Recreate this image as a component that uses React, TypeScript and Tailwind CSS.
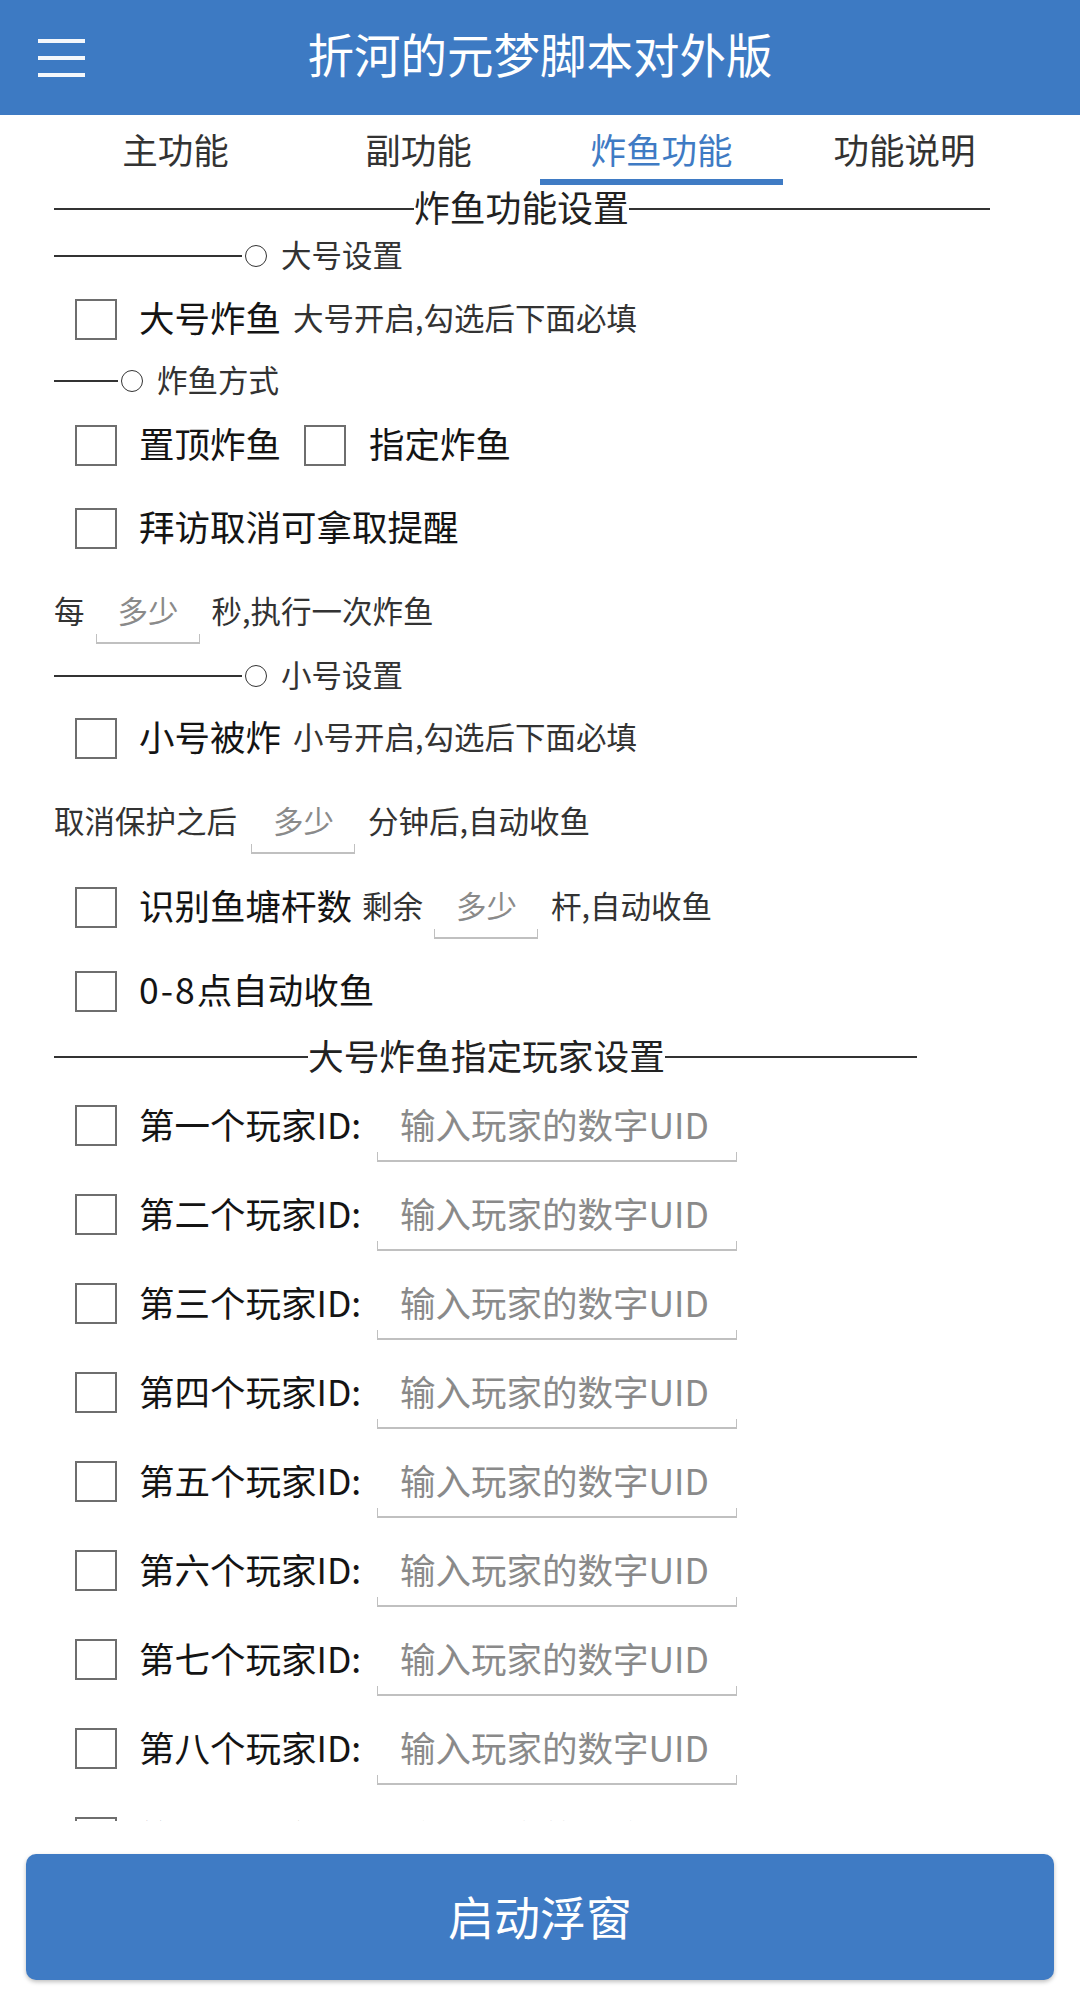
import React from "react";

const font = "font-['Noto_Sans_CJK_SC','Noto_Sans',sans-serif]";

const tabs = ["主功能", "副功能", "炸鱼功能", "功能说明"];
const players = ["第一", "第二", "第三", "第四", "第五", "第六", "第七", "第八", "第九"];

const Line = ({ className }: { className: string }) => (
  <div className={`h-[2px] bg-[#333] shrink-0 ${className}`} />
);

const Circle = ({ className }: { className: string }) => (
  <div className={`w-[22px] h-[22px] rounded-full border-[1.5px] border-[#333] shrink-0 ${className}`} />
);

const Box = ({ className = "" }: { className?: string }) => (
  <div className={`w-[42px] h-[41px] border-2 border-[#6e6e6e] bg-white shrink-0 ${className}`} />
);

// android style edit text: hint + underline with little ticks at the ends
const Field = ({ text, big, className }: { text: string; big?: boolean; className: string }) => (
  <div className={`flex flex-col shrink-0 ${big ? "pt-[14px]" : "pt-[12px]"} ${className}`}>
    <div
      className={
        big
          ? "flex items-center h-[44px] pl-[23px] pb-[4px] text-[35.5px] leading-none text-[#8a8a8a] whitespace-nowrap"
          : "flex items-center h-[40px] pl-[22px] pb-[4px] text-[30.5px] leading-none text-[#8a8a8a] whitespace-nowrap"
      }
    >
      {text}
    </div>
    <div className={`${big ? "mt-[4px]" : "mt-[2px]"} h-[10px] border-x-[1.5px] border-b-2 border-[#c0c0c0]`} />
  </div>
);

const Label = ({ children, className = "" }: { children: React.ReactNode; className?: string }) => (
  <span className={`pb-[4px] text-[35.5px] leading-none text-[#141414] whitespace-nowrap ${className}`}>{children}</span>
);

const Hint = ({ children, className = "" }: { children: React.ReactNode; className?: string }) => (
  <span className={`pb-[4px] text-[30.5px] leading-none text-[#333] whitespace-nowrap ${className}`}>{children}</span>
);

const SubHead = ({ title, line, className }: { title: string; line: string; className: string }) => (
  <div className={`flex items-center pl-[54px] ${className}`}>
    <Line className={line} />
    <Circle className="ml-[3px]" />
    <span className="ml-[14px] pb-[4px] text-[30.5px] leading-none text-[#333]">{title}</span>
  </div>
);

export default function App() {
  return (
    <div className={`w-[1080px] h-[2000px] bg-white flex flex-col ${font}`}>
      {/* top bar */}
      <div className="h-[115px] shrink-0 bg-[#3d7ac3] grid grid-cols-[1fr_auto_1fr] items-center">
        <div className="pl-[38px] flex flex-col gap-[13px]">
          <div className="w-[47px] h-[4px] bg-[#f4f7fb]" />
          <div className="w-[47px] h-[4px] bg-[#f4f7fb]" />
          <div className="w-[47px] h-[4px] bg-[#f4f7fb]" />
        </div>
        <div className="text-[46.5px] leading-none text-white pb-[8px]">折河的元梦脚本对外版</div>
        <div />
      </div>

      <div className="h-[1706px] shrink-0 overflow-hidden flex flex-col">
        {/* tabs */}
        <div className="h-[70px] shrink-0 px-[54px] grid grid-cols-4">
          {tabs.map((t, i) => (
            <div key={t} className="flex flex-col">
              <div
                className={
                  i === 2
                    ? "h-[64px] pt-[4px] flex items-center justify-center text-[35.5px] leading-none text-[#3f7bc4]"
                    : "h-[64px] pt-[4px] flex items-center justify-center text-[35.5px] leading-none text-[#333]"
                }
              >
                {t}
              </div>
              {i === 2 && <div className="h-[6px] bg-[#3f7bc4]" />}
            </div>
          ))}
        </div>

        {/* section heading */}
        <div className="h-[48px] shrink-0 flex items-center pl-[54px]">
          <Line className="w-[360px]" />
          <span className="pb-[4px] text-[35.8px] leading-none text-[#222] whitespace-nowrap">炸鱼功能设置</span>
          <Line className="w-[361px]" />
        </div>

        <SubHead title="大号设置" line="w-[188px]" className="h-[46px] shrink-0" />

        <div className="h-[80px] shrink-0 flex items-center pl-[75px]">
          <Box />
          <Label className="ml-[22px]">大号炸鱼</Label>
          <Hint className="ml-[12px]">大号开启,勾选后下面必填</Hint>
        </div>

        <SubHead title="炸鱼方式" line="w-[64px]" className="h-[44px] shrink-0" />

        <div className="h-[84px] shrink-0 flex items-center pl-[75px]">
          <Box />
          <Label className="ml-[22px]">置顶炸鱼</Label>
          <Box className="ml-[23px]" />
          <Label className="ml-[23px]">指定炸鱼</Label>
        </div>

        <div className="h-[82px] shrink-0 flex items-center pl-[75px]">
          <Box />
          <Label className="ml-[22px]">拜访取消可拿取提醒</Label>
        </div>

        <div className="h-[86px] shrink-0 flex items-center pl-[54px]">
          <Hint>每</Hint>
          <Field text="多少" className="w-[104px] ml-[11px]" />
          <Hint className="ml-[12px]">秒,执行一次炸鱼</Hint>
        </div>

        <SubHead title="小号设置" line="w-[188px]" className="h-[42px] shrink-0" />

        <div className="h-[82px] shrink-0 flex items-center pl-[75px]">
          <Box />
          <Label className="ml-[22px]">小号被炸</Label>
          <Hint className="ml-[12px]">小号开启,勾选后下面必填</Hint>
        </div>

        <div className="h-[86px] shrink-0 flex items-center pl-[54px]">
          <Hint>取消保护之后</Hint>
          <Field text="多少" className="w-[104px] ml-[14px]" />
          <Hint className="ml-[13px]">分钟后,自动收鱼</Hint>
        </div>

        <div className="h-[84px] shrink-0 flex items-center pl-[75px]">
          <Box />
          <Label className="ml-[22px]">识别鱼塘杆数</Label>
          <Hint className="ml-[10px]">剩余</Hint>
          <Field text="多少" className="w-[104px] ml-[11px]" />
          <Hint className="ml-[13px]">杆,自动收鱼</Hint>
        </div>

        <div className="h-[84px] shrink-0 flex items-center pl-[75px]">
          <Box />
          <Label className="ml-[22px]">
            <span className="tracking-[2px]">0-8</span>点自动收鱼
          </Label>
        </div>

        <div className="h-[48px] shrink-0 flex items-center pl-[54px]">
          <Line className="w-[254px]" />
          <span className="pb-[4px] text-[35.7px] leading-none text-[#222] whitespace-nowrap">大号炸鱼指定玩家设置</span>
          <Line className="w-[252px]" />
        </div>

        {players.map((p) => (
          <div key={p} className="h-[89px] shrink-0 flex items-center pl-[75px]">
            <Box />
            <Label className="ml-[22px] w-[238px]">{p}个玩家ID:</Label>
            <Field big text="输入玩家的数字UID" className="w-[360px]" />
          </div>
        ))}
      </div>

      {/* bottom button */}
      <div className="flex-1 px-[26px] pt-[33px] pb-[20px]">
        <button className="w-full h-[126px] pb-[5px] rounded-[10px] bg-[#3f7bc4] shadow-[0_2px_4px_rgba(0,0,0,0.25)] flex items-center justify-center text-[46px] leading-none text-white">
          启动浮窗
        </button>
      </div>
    </div>
  );
}
